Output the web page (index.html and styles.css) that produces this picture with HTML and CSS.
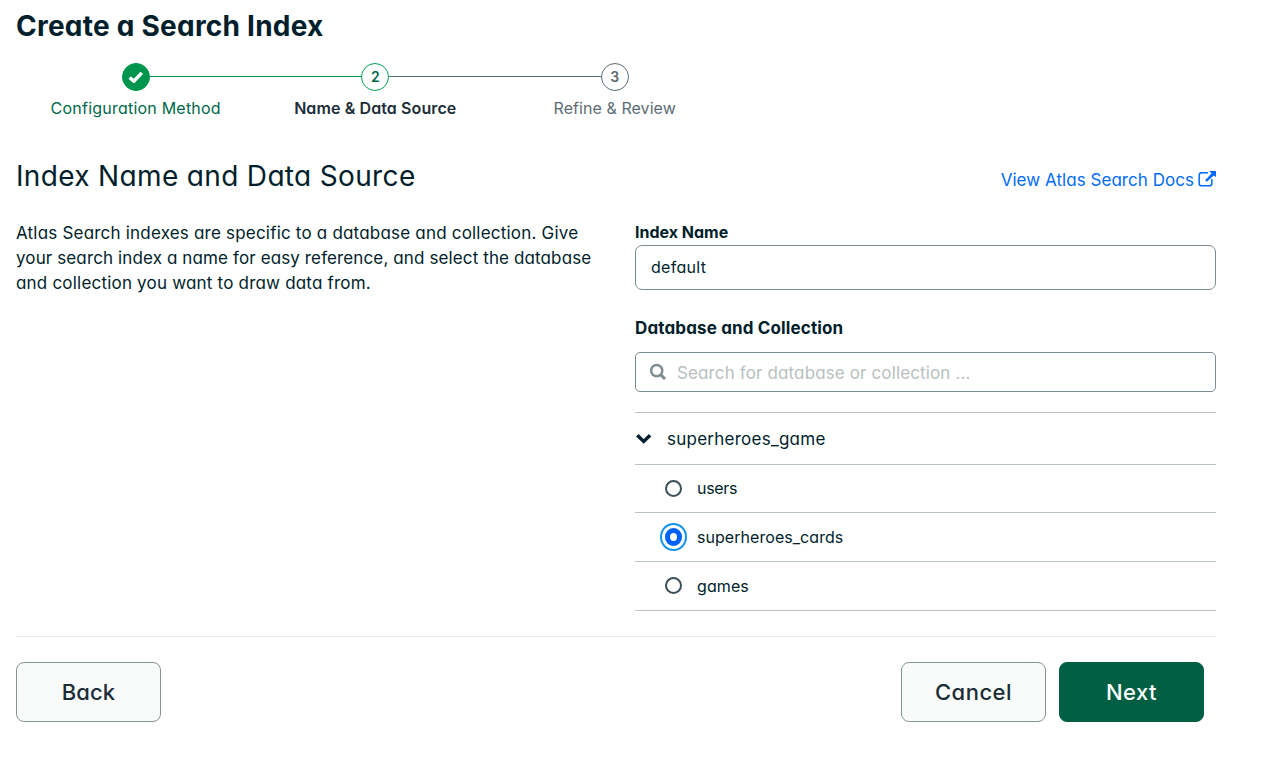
FILE: index.html
```html
<!DOCTYPE html>
<html lang="en">
<head>
<meta charset="utf-8">
<title>Create a Search Index</title>
<link rel="stylesheet" href="styles.css">
</head>
<body>
<main class="page">
  <h1 class="title"><span>Create a Search Index</span></h1>
  <ol class="stepper">
    <li class="step step-done">
      <span class="step-mark"><svg width="18" height="18" viewBox="0 0 18 18"><path d="M2.7 9.4 L6.8 13.2 L14.8 4.9" fill="none" stroke="#fff" stroke-width="3.4" stroke-linejoin="round"/></svg></span>
      <span class="step-label">Configuration Method</span>
    </li>
    <li class="step step-current">
      <span class="step-mark">2</span>
      <span class="step-label">Name &amp; Data Source</span>
    </li>
    <li class="step step-next">
      <span class="step-mark">3</span>
      <span class="step-label">Refine &amp; Review</span>
    </li>
  </ol>
  <header class="section-head">
    <h2 class="section-title">Index Name and Data Source</h2>
    <a class="docs"><span>View Atlas Search Docs</span><svg width="18" height="16" viewBox="0 0 18 16"><path d="M10 1.8H3.6a2.4 2.4 0 0 0-2.4 2.4v8.2a2.4 2.4 0 0 0 2.4 2.4h7.8a2.4 2.4 0 0 0 2.4-2.4V8" fill="none" stroke="#016bf8" stroke-width="1.5"/><path d="M11 0H18V6L15.8 4.4L8.8 10.8L7.2 9.2L13.6 2.2Z" fill="#016bf8"/></svg></a>
  </header>
  <div class="columns">
    <p class="intro"><span class="l1">Atlas Search indexes are specific to a database and collection. Give</span><br><span class="l2">your search index a name for easy reference, and select the database</span><br><span class="l3">and collection you want to draw data from.</span></p>
    <section class="form">
      <div class="label label-name">Index Name</div>
      <div class="input">default</div>
      <div class="label label-db">Database and Collection</div>
      <div class="search">
        <svg width="18" height="18" viewBox="0 0 18 18" fill="none" stroke="#7c8c91"><circle cx="7.7" cy="7.6" r="5.6" stroke-width="2.4"/><path d="M11.5 11.5L16 16" stroke-width="3"/></svg>
        <span class="placeholder">Search for database or collection ...</span>
      </div>
      <div class="tree">
        <div class="row row-db"><svg width="17" height="12" viewBox="0 0 17 12"><path d="M2.3 2.3L8.7 8.5L15.1 2.3" fill="none" stroke="#001e2b" stroke-width="3.4"/></svg><span class="db-name">superheroes_game</span></div>
        <div class="row row-users"><i class="radio"></i><span class="n-users">users</span></div>
        <div class="row row-tall"><i class="radio radio-on"></i><span class="n-cards">superheroes_cards</span></div>
        <div class="row row-tall row-games"><i class="radio"></i><span class="n-games">games</span></div>
      </div>
    </section>
  </div>
  <footer class="actions">
    <div class="btn btn-back"><span>Back</span></div>
    <div class="btn btn-cancel"><span>Cancel</span></div>
    <div class="btn btn-next"><span>Next</span></div>
  </footer>
</main>
</body>
</html>
```
FILE: styles.css
```css
* { box-sizing: border-box; }
body {
  margin: 0;
  background: #fff;
  color: #001e2b;
  font-family: Inter, "Liberation Sans", sans-serif;
  font-feature-settings: "cv11";
  font-size: 16px;
}
svg { display: block; flex: none; }
.page { width: 1216px; padding-left: 16px; }
.title { margin: 0; padding-top: 6px; height: 63px; font-size: 28px; line-height: 40px; font-weight: 700; letter-spacing: 0.24px; }
.stepper { display: flex; width: 718.5px; height: 93px; margin: 0; padding: 0; list-style: none; }
.step { flex: 1; display: grid; grid-template-columns: 1fr 28px 1fr; grid-template-rows: 28px 34px; align-items: center; color: #5c6c75; }
.step::before, .step::after { content: ""; height: 1px; grid-row: 1; background: #5c6c75; margin-top: -1px; }
.step::before { grid-column: 1; }
.step::after { grid-column: 3; }
.step-done::before, .step-next::after { visibility: hidden; }
.step-done::after, .step-current::before { background: #00954f; }
.step-mark { grid-column: 2; grid-row: 1; width: 28px; height: 28px; border: 1px solid #5c6c75; border-radius: 50%; display: flex; align-items: center; justify-content: center; font-size: 14px; line-height: 24px; font-weight: 600; }
.step:not(.step-done) .step-mark { padding-bottom: 1px; }
.step-done .step-mark { background: #00954f; border-color: #00954f; }
.step-current .step-mark { border-color: #00a35c; color: #00684a; }
.step-label { grid-column: 1 / 4; grid-row: 2; justify-self: center; white-space: nowrap; font-size: 16px; line-height: 20px; letter-spacing: 0.06px; }
.step-done .step-label { color: #00684a; letter-spacing: 0.22px; }
.step-current .step-label { color: #1c2d38; font-weight: 600; letter-spacing: 0.1px; }
.section-head { display: flex; justify-content: space-between; height: 64px; }
.section-title { margin: 0; font-size: 28px; line-height: 40px; font-weight: 400; letter-spacing: 0.34px; }
.docs { display: flex; gap: 4px; height: 24px; margin-top: 12px; font-size: 17px; line-height: 24px; letter-spacing: 0.04px; color: #016bf8; }
.docs svg { margin-top: 3px; }
.columns { display: grid; grid-template-columns: 581px 581px; justify-content: space-between; height: 416px; }
.intro { margin: 0; padding-top: 1px; font-size: 17px; line-height: 25px; white-space: nowrap; }
.l1, .l3 { letter-spacing: 0.2px; }
.l2 { letter-spacing: 0.12px; }
.label { font-weight: 700; font-size: 16px; line-height: 24px; }
.label-name { height: 25px; }
.input { height: 45px; border: 1px solid #7c8c91; border-radius: 7px; padding: 0 15px; font-size: 16px; line-height: 43px; letter-spacing: 0.3px; }
.label-db { margin-top: 26px; height: 36px; font-size: 17px; letter-spacing: 0.14px; }
.search { height: 40px; display: flex; align-items: center; border: 1px solid #7c8c91; border-radius: 5px; padding-left: 13px; gap: 10px; font-size: 17px; letter-spacing: 0.13px; color: #b8c0bf; }
.placeholder { padding-top: 2px; }
.tree { margin-top: 20px; border-top: 1px solid #b8c4c2; }
.row { height: 48px; display: flex; align-items: center; gap: 15px; padding-left: 30px; border-bottom: 1px solid #b8c4c2; font-size: 16px; }
.row-tall { height: 49px; }
.row-db { height: 52px; padding-left: 0; gap: 15px; font-size: 17px; letter-spacing: 0.25px; }
.n-users { padding-bottom: 1px; letter-spacing: -0.3px; }
.n-cards { letter-spacing: 0.05px; }
.row-games { padding-bottom: 1px; }
.n-games { letter-spacing: 0.1px; }
.radio { width: 17px; height: 17px; border: 2px solid #3d4f58; border-radius: 50%; flex: none; }
.radio-on { height: 18px; border: 5px solid #0161f8; box-shadow: 0 0 0 3px #fff, 0 0 0 5px #0f93ec; }
.actions { display: flex; border-top: 1px solid #e8edeb; padding: 25px 12px 0 0; gap: 13px; }
.btn { width: 145px; height: 60px; display: flex; align-items: center; justify-content: center; border: 1px solid #889397; border-radius: 8px; background: #f9fbfa; color: #1c2d38; font-size: 22px; font-weight: 500; letter-spacing: 0.5px; }
.btn-back { margin-right: auto; letter-spacing: 0.1px; }
.btn-next { background: #005f43; border-color: #005f43; color: #fff; }
```
